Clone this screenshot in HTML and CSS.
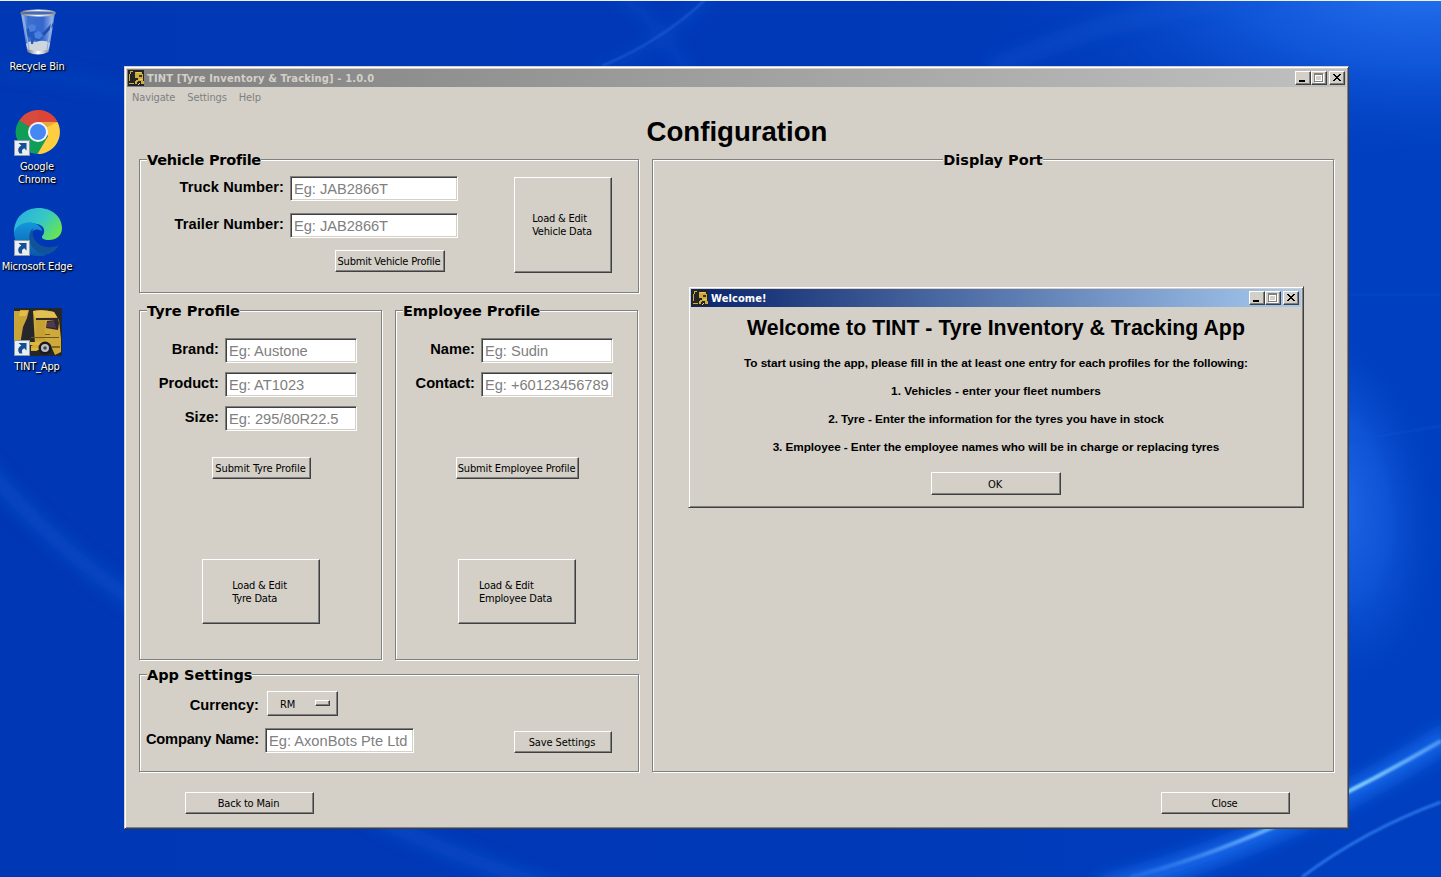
FILE: index.html
```
<!DOCTYPE html>
<html lang="en">
<head>
<meta charset="utf-8">
<title>TINT [Tyre Inventory &amp; Tracking] - 1.0.0</title>
<link rel="stylesheet" href="styles.css">
</head>
<body>
<div class="desktop">
  <svg class="wallpaper" viewBox="0 0 1441 877" preserveAspectRatio="none" aria-hidden="true">
    <defs>
      <radialGradient id="glowTop" gradientUnits="userSpaceOnUse" cx="0" cy="0" r="1" gradientTransform="translate(1420 -20) scale(420 190)"><stop offset="0" stop-color="#2674f0"/><stop offset=".45" stop-color="#145cdf" stop-opacity=".8"/><stop offset="1" stop-color="#0040c0" stop-opacity="0"/></radialGradient>
      <radialGradient id="glowMid" gradientUnits="userSpaceOnUse" cx="0" cy="0" r="1" gradientTransform="translate(1335 505) rotate(-8) scale(105 190)"><stop offset="0" stop-color="#2168e8"/><stop offset=".5" stop-color="#125adc" stop-opacity=".75"/><stop offset="1" stop-color="#0044c4" stop-opacity="0"/></radialGradient>
      <linearGradient id="base" x1="0" x2="1" y1="0" y2="0"><stop offset="0" stop-color="#0037b4"/><stop offset=".6" stop-color="#0039b8"/><stop offset="1" stop-color="#0040c0"/></linearGradient>
      <linearGradient id="beam" gradientUnits="userSpaceOnUse" x1="1120" y1="877" x2="1441" y2="740"><stop offset="0" stop-color="#2f78ee" stop-opacity=".3"/><stop offset=".4" stop-color="#60a8fa"/><stop offset=".72" stop-color="#86d2ff"/><stop offset="1" stop-color="#4a94f6"/></linearGradient>
      <filter id="soft1" x="-20%" y="-20%" width="140%" height="140%"><feGaussianBlur stdDeviation="1"/></filter>
      <filter id="soft8" x="-50%" y="-50%" width="200%" height="200%"><feGaussianBlur stdDeviation="8"/></filter>
    </defs>
    <rect width="1441" height="877" fill="url(#base)"/>
    <rect x="1000" width="441" height="300" fill="url(#glowTop)"/>
    <rect x="1220" y="300" width="221" height="420" fill="url(#glowMid)"/>
    <path d="M1340 294h110v1h-110zM1340 442l110-18v1l-110 18z" stroke="#0d55d3" stroke-width="1" fill="none" opacity=".5" filter="url(#soft1)"/>
    <path d="M-20 460Q50 545 140 605M370 815Q450 855 560 890" stroke="#0854cf" stroke-width="14" fill="none" opacity=".65" filter="url(#soft8)"/>
    <path d="M0 68Q60 75 130 92" stroke="#0849c4" stroke-width="10" fill="none" opacity=".5" filter="url(#soft8)"/>
    <path d="M590 75Q660 50 710 -5M620 -5Q660 25 690 75" stroke="#0c50cc" stroke-width="10" fill="none" opacity=".5" filter="url(#soft8)"/>
    <path d="M602 66Q660 42 705 0" stroke="#2c72df" stroke-width="1.5" fill="none" opacity=".75" filter="url(#soft1)"/>
    <path d="M990 70Q1120 10 1260 -5" stroke="#1458d5" stroke-width="12" fill="none" opacity=".5" filter="url(#soft8)"/>
    <path d="M1100 890Q1290 840 1450 735" stroke="#1768ea" stroke-width="20" fill="none" filter="url(#soft8)"/>
    <path d="M1130 877C1220 855 1330 806 1441 741" stroke="url(#beam)" stroke-width="4" fill="none" filter="url(#soft1)"/>
    <path d="M1302 877Q1365 830 1441 802" stroke="#2d78ee" stroke-width="2.500" fill="none" filter="url(#soft1)"/>
    <rect width="1441" height="1" fill="#f0f0f0"/>
  </svg>

  <svg class="sprites" aria-hidden="true">
    <symbol id="shortcut" viewBox="0 0 16 16"><path d="M0 0h16v16H0z" fill="#8b99a8"/><path d="M1 1h14v14H1z" fill="#e9eef4"/><path d="M4.500 3h8v7.500l-2.300-2.300C8 9.300 7.400 11 8.400 13.500H5.500C3.300 10.300 4 7.300 7.300 5.500z" fill="#174f94"/></symbol>
    <symbol id="truck" viewBox="0 0 48 48">
      <path d="M0 0h48v48H0z" fill="#25272a"/>
      <path d="M0 3h6V2h9l-2 8-4 9-3 18H0z" fill="#c9a437"/><path d="M6 3h8l-2 5H5z" fill="#e0bd4d"/>
      <path d="M19 3q10-2 21 1l5 8 2 19v13l-6 3-5-11-8-1-5 8h-6v-5l4-2z" fill="#cfa93a"/>
      <path d="M19 3q10-2 21 1l3 5-22 1z" fill="#e2c154"/>
      <path d="M22 10h22l1 5-1 7-12-2 1-7 8-1H22z" fill="#31272c"/>
      <path d="M33 14l7-1 2 7-9-1z" fill="#4e3a4e"/>
      <path d="M22 12h9v20h-9z" fill="#c7a033"/><path d="M17 29h28v1H17zM31 26h5v1h-5z" fill="#6d571d"/>
      <path d="M16 34h11v3H16zM17 40h8v2h-8z" fill="#dfb83b"/>
      <circle cx="31" cy="40" r="6.500" fill="#171b20"/><circle cx="31" cy="40" r="4" fill="#bdc0c3"/><circle cx="31" cy="40" r="1.800" fill="#44494e"/>
      <path d="M38 38h8v2h-8z" fill="#806819"/>
    </symbol>
    <symbol id="truck-small" viewBox="0 0 16 16" shape-rendering="crispEdges">
      <path d="M0 0h16v16H0z" fill="#222425"/>
      <path d="M2 1h3v1H3v2H2v7H1V4h1zM7 2h7v2h1v7h1v3h-3v-3h-3v1H8v-2h2V8H7z" fill="#cfac3c"/>
      <path d="M11 5h3v2h-3z" fill="#3b3029"/><path d="M1 13h5v1H1zM7 11h2v3H7z" fill="#cfac3c"/>
      <path d="M8 2h5v1H8zM11 9h4v1h-4z" fill="#e7c957"/>
      <path d="M10 12h3v3h-3z" fill="#222425"/><path d="M11 13h1v1h-1zM10 14h1v1h-1z" fill="#d5d5d5"/>
    </symbol>
  </svg>

  <nav class="shortcuts">
    <div class="shortcut">
      <svg class="shortcut-icon" viewBox="0 0 48 48">
        <defs><linearGradient id="glass"><stop offset="0" stop-color="#a7c2ee"/><stop offset=".2" stop-color="#3c70cf"/><stop offset=".65" stop-color="#3567ce"/><stop offset=".9" stop-color="#8eade8"/><stop offset="1" stop-color="#5e83cd"/></linearGradient><linearGradient id="rim"><stop offset="0" stop-color="#72777c"/><stop offset=".5" stop-color="#fff"/><stop offset="1" stop-color="#8e9296"/></linearGradient></defs>
        <path d="M7 5h34l-6 37q-11 6-22 0z" fill="url(#glass)"/>
        <path d="M12 36q3-4 10-2 8-3 14 1l-2 8q-10 4-20 0z" fill="#cfd5dd"/>
        <path d="M13 41q11 4 22 0l-.5 3q-10.500 5-21 0z" fill="url(#rim)"/>
        <path d="M12 22l4-3 5 2 1 4 5 1 2 4-4 3-5-1-1 4h-2v-6l-4-2z" fill="#2358bd"/><path d="M14 18l4-2 4 2-1 5-5 1zM20 25l5-2 4 4-3 4-5-1z" fill="#4a80dc"/>
        <path d="M39 16L29 27" stroke="#214fad" stroke-width="3"/>
        <path d="M9 7l6 34M39 7l-6 34" stroke="#94aee0" stroke-width="1.200"/>
        <ellipse cx="24" cy="5" rx="17" ry="2.700" fill="#476bb5" stroke="url(#rim)" stroke-width="1.700"/>
      </svg>
      <span class="shortcut-name">Recycle Bin</span>
    </div>
    <div class="shortcut">
      <svg class="shortcut-icon" viewBox="0 0 48 48">
        <path d="M24 24L5 13A22 22 0 0 1 43 13z" fill="#d84a3e"/><path d="M24 2A22 22 0 0 1 43.300 13.500H24z" fill="#db4437"/>
        <path d="M5 12.500A22 22 0 0 0 24 46l9-16-9-6z" fill="#109d58"/>
        <path d="M24 14h19.500A22 22 0 0 1 23.500 46L34 28z" fill="#ffcd40"/>
        <path d="M43.500 14H27l6 5z" fill="#e5a83c"/>
        <circle cx="24" cy="24" r="10" fill="#f4f5f7"/><circle cx="24" cy="24" r="8" fill="#4587f3"/>
        <use href="#shortcut" x="0" y="32" width="16" height="16"/>
      </svg>
      <span class="shortcut-name">Google<br>Chrome</span>
    </div>
    <div class="shortcut">
      <svg class="shortcut-icon" viewBox="0 0 48 48">
        <defs><linearGradient id="edgeTop" y1=".2" y2=".7"><stop offset="0" stop-color="#27afe3"/><stop offset=".55" stop-color="#37c9c2"/><stop offset="1" stop-color="#69e54d"/></linearGradient><linearGradient id="edgeLow" x2="0" y2="1"><stop offset="0" stop-color="#1497de"/><stop offset="1" stop-color="#0959a8"/></linearGradient></defs>
        <path d="M0 25C0 8 12 0 25 0c13 0 23 9 23 20 0 8-6 12-13 12-5 0-9-2-6-5 3-5 0-10-6-11C14 13 4 16 0 25z" fill="url(#edgeTop)"/>
        <path d="M0 24c4-9 15-12 22-8 4 2 6 4 6 7-7-4-11 0-11 6 0 8 9 15 16 18-17 5-33-6-33-23z" fill="url(#edgeLow)"/>
        <path d="M19 20c-9 9-1 28 16 26 5-2 8-5 10-9-13 6-29-1-26-17z" fill="#11529b"/>
        <use href="#shortcut" x="0" y="32" width="16" height="16"/>
      </svg>
      <span class="shortcut-name">Microsoft Edge</span>
    </div>
    <div class="shortcut">
      <svg class="shortcut-icon" viewBox="0 0 48 48"><use href="#truck" width="48" height="48"/><use href="#shortcut" x="0" y="32" width="16" height="16"/></svg>
      <span class="shortcut-name">TINT_App</span>
    </div>
  </nav>

  <main class="window main-window">
    <header class="titlebar inactive">
      <svg class="title-icon"><use href="#truck-small"/></svg><span class="title-text main-title">TINT [Tyre Inventory &amp; Tracking] - 1.0.0</span>
      <span class="ctl"><svg viewBox="0 0 16 14" shape-rendering="crispEdges"><path d="M4 9h6v2H4z"/></svg></span>
      <span class="ctl"><svg viewBox="0 0 16 14" shape-rendering="crispEdges"><path d="M4 3h9v9H4z" fill="#fff"/><path d="M3 2h9v9H3z" fill="#808080"/><path d="M4 4h7v6H4z" fill="#fff"/><path d="M5 5h5v4H5z" fill="#d4d0c8"/></svg></span>
      <span class="ctl close"><svg viewBox="0 0 16 14" shape-rendering="crispEdges"><path d="M4 3h2v1h1v1h2V4h1V3h2v1h-1v1h-1v1H9v1h1v1h1v1h1v1h-2V9H9V8H7v1H6v1H4V9h1V8h1V7h1V6H6V5H5V4H4z"/></svg></span>
    </header>
    <nav class="menubar"><span>Navigate</span><span>Settings</span><span>Help</span></nav>
    <h1 class="page-title">Configuration</h1>
    <div class="columns">
      <div class="left-column">
        <section class="group vehicle">
          <h2 class="legend vehicle-legend">Vehicle Profile</h2>
          <div class="vehicle-body">
            <div class="vehicle-form">
              <div class="field"><label class="wide-label">Truck Number:</label><input placeholder="Eg: JAB2866T"></div>
              <div class="field"><label class="wide-label">Trailer Number:</label><input placeholder="Eg: JAB2866T"></div>
              <button class="btn submit-vehicle">Submit Vehicle Profile</button>
            </div>
            <button class="btn load-vehicle"><span>Load &amp; Edit<br>Vehicle Data</span></button>
          </div>
        </section>
        <div class="profiles">
          <section class="group profile">
            <h2 class="legend">Tyre Profile</h2>
            <div class="profile-fields">
              <div class="field"><label>Brand:</label><input placeholder="Eg: Austone"></div>
              <div class="field"><label>Product:</label><input placeholder="Eg: AT1023"></div>
              <div class="field"><label>Size:</label><input placeholder="Eg: 295/80R22.5"></div>
            </div>
            <button class="btn submit-tyre">Submit Tyre Profile</button>
            <button class="btn load-profile"><span>Load &amp; Edit<br>Tyre Data</span></button>
          </section>
          <section class="group profile">
            <h2 class="legend employee-legend">Employee Profile</h2>
            <div class="profile-fields">
              <div class="field"><label>Name:</label><input placeholder="Eg: Sudin"></div>
              <div class="field"><label>Contact:</label><input placeholder="Eg: +60123456789"></div>
            </div>
            <button class="btn submit-employee">Submit Employee Profile</button>
            <button class="btn load-profile"><span>Load &amp; Edit<br>Employee Data</span></button>
          </section>
        </div>
        <section class="group settings">
          <h2 class="legend">App Settings</h2>
          <div class="field currency"><label>Currency:</label><button class="btn select"><span>RM</span><i class="select-mark"></i></button></div>
          <div class="field company"><label>Company Name:</label><input placeholder="Eg: AxonBots Pte Ltd"><button class="btn save">Save Settings</button></div>
        </section>
      </div>
      <section class="group display"><h2 class="legend display-legend">Display Port</h2></section>
    </div>
    <footer class="actions"><button class="btn">Back to Main</button><button class="btn">Close</button></footer>
  </main>

  <section class="window dialog">
    <header class="titlebar active">
      <svg class="title-icon"><use href="#truck-small"/></svg><span class="title-text">Welcome!</span>
      <span class="ctl"><svg viewBox="0 0 16 14" shape-rendering="crispEdges"><path d="M4 9h6v2H4z"/></svg></span>
      <span class="ctl"><svg viewBox="0 0 16 14" shape-rendering="crispEdges"><path d="M4 3h9v9H4z" fill="#fff"/><path d="M3 2h9v9H3z" fill="#808080"/><path d="M4 4h7v6H4z" fill="#fff"/><path d="M5 5h5v4H5z" fill="#d4d0c8"/></svg></span>
      <span class="ctl close"><svg viewBox="0 0 16 14" shape-rendering="crispEdges"><path d="M4 3h2v1h1v1h2V4h1V3h2v1h-1v1h-1v1H9v1h1v1h1v1h1v1h-2V9H9V8H7v1H6v1H4V9h1V8h1V7h1V6H6V5H5V4H4z"/></svg></span>
    </header>
    <div class="dialog-body">
      <h2 class="dialog-title">Welcome to TINT - Tyre Inventory &amp; Tracking App</h2>
      <p>To start using the app, please fill in the at least one entry for each profiles for the following:</p>
      <p class="short-line">1. Vehicles - enter your fleet numbers</p>
      <p>2. Tyre - Enter the information for the tyres you have in stock</p>
      <p>3. Employee - Enter the employee names who will be in charge or replacing tyres</p>
      <button class="btn ok">OK</button>
    </div>
  </section>
</div>
</body>
</html>
```
FILE: styles.css
```
* { box-sizing: border-box; }
body { margin: 0; overflow: hidden; font-family: "DejaVu Sans Condensed", "DejaVu Sans", sans-serif; font-stretch: condensed; font-size: 11px; color: #000; }
.desktop { position: relative; width: 1441px; height: 877px; overflow: hidden; background: #0038b5; }
.wallpaper { position: absolute; inset: 0; width: 100%; height: 100%; }
.sprites { position: absolute; width: 0; height: 0; }

.shortcuts { position: relative; display: flex; flex-direction: column; width: 74px; padding-top: 8px; }
.shortcut { display: flex; flex-direction: column; align-items: center; height: 100px; }
.shortcut-icon { width: 48px; height: 48px; margin-left: 1px; }
.shortcut-name { margin-top: 4px; color: #fff; line-height: 13px; letter-spacing: -.17px; text-align: center; white-space: nowrap; text-shadow: 1px 1px 2px #000, 1px 1px 1px #000; }

.window { position: absolute; background: #d4d0c8; border: 1px solid; border-color: #d4d0c8 #404040 #404040 #d4d0c8; box-shadow: inset 1px 1px #fff, inset -1px -1px #808080; padding: 2px; }
.main-window { left: 124px; top: 66px; width: 1225px; height: 763px; }
.titlebar { display: flex; align-items: center; height: 18px; padding: 0 2px 0 1px; color: #fff; font-weight: bold; }
.inactive { padding-right: 1px; background: linear-gradient(90deg, #808080, #c0c0c0); color: #d4d0c8; }
.active { background: linear-gradient(90deg, #0a246a, #a6caf0); }
.title-icon { width: 16px; height: 16px; }
.title-text { flex: 1; padding-left: 3px; white-space: nowrap; letter-spacing: .1px; }
.main-title { letter-spacing: .17px; }
.ctl { width: 16px; height: 14px; background: #d4d0c8; border: 1px solid; border-color: #fff #404040 #404040 #fff; box-shadow: inset -1px -1px #808080; }
.ctl svg { display: block; width: 16px; height: 14px; margin: -1px; }
.ctl.close { margin-left: 2px; }
.menubar { display: flex; gap: 12px; height: 20px; padding-left: 5px; line-height: 21px; color: #808080; letter-spacing: -.14px; }
.page-title { margin: 0; height: 52px; padding-left: 1px; font: bold 27.6px/50px "Liberation Sans", Arial, sans-serif; text-align: center; }

.columns { display: flex; gap: 13px; padding-left: 12px; }
.left-column { width: 500px; }
.group { border: 1px solid #808080; box-shadow: 1px 1px #fff, inset 1px 1px #fff; }
.legend { width: fit-content; height: 18px; margin: -9px 0 -1px 7px; background: #d4d0c8; font: bold 14.5px/18px "DejaVu Sans", sans-serif; white-space: nowrap; }
.vehicle-legend { letter-spacing: -.26px; }
.employee-legend { letter-spacing: -.08px; }
.field { display: flex; align-items: center; font-family: "Liberation Sans", Arial, sans-serif; }
.field label { padding-bottom: 3px; font-size: 14.67px; font-weight: bold; text-align: right; white-space: nowrap; }
.field .wide-label { letter-spacing: .08px; }
.field input { height: 25px; margin: 0 0 0 6px; padding: 1px 2px 0 3px; background: #fff; border: 1px solid; border-color: #808080 #fff #fff #808080; border-radius: 0; box-shadow: inset 1px 1px #404040, inset -1px -1px #d4d0c8; outline: 0; font: 14.67px "Liberation Sans", Arial, sans-serif; letter-spacing: -.04px; }
.field input::placeholder { color: #808080; opacity: 1; }
.btn { display: block; height: 22px; margin: 0; padding: 0 2px 0 0; background: #d4d0c8; border: 1px solid; border-color: #fff #404040 #404040 #fff; border-radius: 0; box-shadow: inset -1px -1px #808080; color: #000; font: 11px/13px "DejaVu Sans Condensed", "DejaVu Sans", sans-serif; font-stretch: condensed; letter-spacing: -.2px; white-space: nowrap; }
.btn span { display: inline-block; text-align: left; }

.vehicle { height: 134px; }
.vehicle-body { display: flex; justify-content: space-between; padding: 8px 26px 0 0; }
.vehicle-form label { width: 144px; }
.vehicle-form input { width: 168px; }
.vehicle-form .field { margin-bottom: 12px; }
.submit-vehicle { width: 110px; margin-left: 195px; }
.load-vehicle { width: 98px; height: 96px; margin-top: 1px; }

.profiles { display: flex; gap: 13px; margin-top: 17px; }
.profile { width: 243px; height: 350px; }
.profile-fields { height: 119px; margin-top: 18px; }
.profile .legend { margin-bottom: 0; }
.profile .field { margin-bottom: 9px; }
.profile label { width: 79px; }
.profile input { width: 132px; }
.submit-tyre { width: 99px; margin-left: 72px; letter-spacing: -.1px; }
.submit-employee { width: 123px; margin-left: 60px; letter-spacing: -.15px; }
.load-profile { width: 118px; height: 65px; margin: 80px 0 0 62px; padding-right: 3px; }

.settings { height: 98px; margin-top: 14px; }
.settings label { width: 119px; }
.currency { margin-top: 8px; }
.currency label { padding-bottom: 0; padding-top: 2px; }
.select { display: flex; align-items: center; justify-content: space-between; width: 71px; height: 25px; margin-left: 8px; padding: 1px 7px 0 12px; }
.select-mark { width: 15px; height: 6px; margin-top: -2px; border: 1px solid; border-color: #fff #404040 #404040 #fff; box-shadow: inset -1px -1px #808080; }
.company { margin-top: 12px; }
.company label { letter-spacing: -.2px; }
.company input { width: 149px; letter-spacing: 0; }
.save { width: 98px; margin-left: 100px; margin-top: 3px; letter-spacing: -.1px; }
.display { width: 682px; height: 613px; }
.display-legend { margin-left: auto; margin-right: auto; }
.actions { display: flex; justify-content: space-between; padding: 20px 56px 0 58px; }
.actions .btn { width: 129px; }

.dialog { left: 688px; top: 286px; width: 616px; height: 222px; }
.dialog-body { display: flex; flex-direction: column; align-items: center; font-family: "Liberation Sans", Arial, sans-serif; }
.dialog-title { margin: 7px 0 14px; font-size: 21.3px; line-height: 28px; white-space: nowrap; }
.dialog-body p { height: 28px; margin: 0; font-size: 11.8px; font-weight: bold; line-height: 14px; letter-spacing: -.08px; white-space: nowrap; }
.dialog-body .short-line { letter-spacing: .02px; }
.ok { width: 130px; height: 23px; margin-top: 4px; padding-top: 1px; }
```
